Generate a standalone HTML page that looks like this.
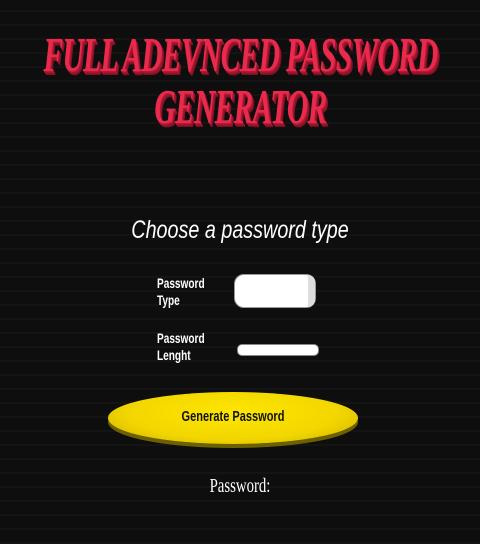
<!DOCTYPE html>
<html><head><style>
body{margin:0;width:480px;height:544px;background:#101010;overflow:hidden;font-family:"Liberation Sans",sans-serif;position:relative;
background-image:repeating-linear-gradient(0deg,#141414 0 2px,#0e0e0e 2px 14px);}
.t{position:absolute;left:-300px;width:1080px;text-align:center;font-family:"Liberation Serif",serif;font-weight:bold;font-style:italic;color:#ea2a4c;font-size:49px;line-height:49px;letter-spacing:-1px;
text-shadow:1px 1px 0 #b01a36,2px 2px 0 #a0162f,3px 3px 0 #8f1329,4px 4px 0 #7a1023;}
.t span{display:inline-block;transform:scaleX(0.6);transform-origin:center;white-space:nowrap}
.c{position:absolute;left:0;width:480px;text-align:center;top:216px;color:#fff;font-style:italic;font-size:25px;transform:scaleX(0.79)}
.l{position:absolute;left:157px;color:#fff;font-weight:bold;font-size:14px;line-height:17px;transform:scaleX(0.72);transform-origin:left}
.sel{position:absolute;left:234px;top:274px;width:82px;height:34px;background:#fff;border:1px solid #999;border-radius:10px;box-sizing:border-box}
.sel:after{content:"";position:absolute;right:0;top:0;width:7px;height:32px;background:#ddd;border-radius:0 9px 9px 0}
.num{position:absolute;left:237px;top:344px;width:82px;height:12px;background:#fff;border:1px solid #888;border-radius:5px;box-sizing:border-box}
.btn{position:absolute;left:108px;top:392px;width:250px;height:52px;border-radius:50%;background:radial-gradient(ellipse at 50% 40%,#ffe600,#f2d600 60%,#c8ad00);box-shadow:0 4px 0 #6d6000;}
.btn div{text-align:center;line-height:50px;font-weight:bold;font-size:14.5px;color:#111;transform:scaleX(0.76)}
.p{position:absolute;left:0;width:480px;text-align:center;top:475px;color:#fff;font-family:"Liberation Serif",serif;font-size:20px;transform:scaleX(0.74)}
</style></head><body>
<div class="t" style="top:30px"><span>FULL ADEVNCED PASSWORD</span></div>
<div class="t" style="top:82px"><span>GENERATOR</span></div>
<div class="c">Choose a password type</div>
<div class="l" style="top:275px">Password<br>Type</div>
<div class="sel"></div>
<div class="l" style="top:330px">Password<br>Lenght</div>
<div class="num"></div>
<div class="btn"><div>Generate Password</div></div>
<div class="p">Password:</div>
</body></html>
